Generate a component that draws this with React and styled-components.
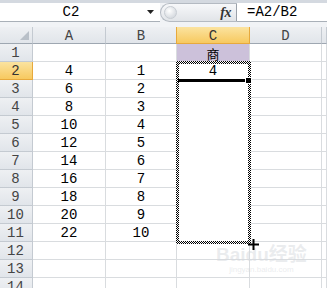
import styled, { createGlobalStyle, css } from 'styled-components';

const GlobalStyle = createGlobalStyle`
  html, body {
    margin: 0;
    padding: 0;
    background: #ffffff;
    overflow: hidden;
  }
  body {
    font-family: "Liberation Mono", monospace;
  }
`

const Window = styled.div`
  width: 327px;
  height: 288px;
  overflow: hidden;
  position: relative;
  background: #ffffff;
`

const FormulaBar = styled.div`
  display: flex;
  align-items: flex-start;
  height: 27px;
  box-sizing: border-box;
  border-top: 3px solid #d4d9e0;
  background: #f1f3f6;
`
const NameBox = styled.div`
  display: flex;
  align-items: center;
  width: 160px;
  height: 19px;
  box-sizing: border-box;
  background: #ffffff;
  border-bottom: 1px solid #a9b0b8;
`
const NameText = styled.span`
  flex: 1;
  text-align: center;
  font-size: 14px;
  color: #000;
  padding-left: 2px;
`
const DropArrow = styled.span`
  width: 20px;
  display: flex;
  justify-content: center;
`
const Grip = styled.div`
  display: flex;
  align-items: center;
  justify-content: space-between;
  width: 77px;
  height: 19px;
  box-sizing: border-box;
  border: 1px solid #b4bac2;
  border-right-color: #9aa1aa;
  border-radius: 10px 0 0 10px;
  background: linear-gradient(#f7f8fa, #e1e4e8);
  padding: 0 5px 0 3px;
`
const Knob = styled.span`
  width: 11px;
  height: 11px;
  border-radius: 50%;
  background: radial-gradient(circle at 40% 35%, #ffffff, #d9dde2 70%);
  border: 1px solid #c7ccd2;
`
const Fx = styled.span`
  font-family: "Liberation Serif", serif;
  font-style: italic;
  font-weight: bold;
  font-size: 14px;
  color: #333;
  letter-spacing: -0.5px;
`
const FormulaInput = styled.div`
  flex: 1;
  height: 19px;
  box-sizing: border-box;
  background: #ffffff;
  border-bottom: 1px solid #a9b0b8;
  padding-left: 10px;
  font-size: 14px;
  line-height: 18px;
  color: #000;
`

const Sheet = styled.div`
  position: relative;
  display: grid;
  grid-template-columns: 33px 73px 71px 73px 72px 1fr;
  grid-template-rows: 17px;
  grid-auto-rows: 18px;
`

const headerLook = css`
  background: linear-gradient(#eef0f3, #e1e5ea);
  color: #444;
  border-right: 1px solid #c4cad1;
  border-bottom: 1px solid #9ea7b1;
`
const activeLook = css`
  background: linear-gradient(#fbe3a0, #f7c95f);
  border-right: 1px solid #e7a93c;
  border-bottom: 1px solid #e7a93c;
  color: #333;
`

const Corner = styled.div`
  ${headerLook}
  box-sizing: border-box;
  display: flex;
  align-items: flex-end;
  justify-content: flex-end;
  padding: 0 3px 3px 0;
`
const ColHead = styled.div`
  ${headerLook}
  ${p => p.$active && activeLook}
  ${p => p.$active && 'border-left: 1px solid #e7a93c; margin-left: -1px;'}
  box-sizing: border-box;
  display: flex;
  align-items: center;
  justify-content: center;
  font-size: 14px;
  padding-top: 1px;
`
const RowHead = styled.div`
  ${headerLook}
  border-bottom: 1px solid #c4cad1;
  ${p => p.$active && activeLook}
  box-sizing: border-box;
  display: flex;
  align-items: center;
  justify-content: center;
  font-size: 14px;
  padding-right: 1px;
`
const Cell = styled.div`
  box-sizing: border-box;
  border-right: 1px solid ${p => (p.$clear ? 'transparent' : '#d9dcdf')};
  border-bottom: 1px solid ${p => (p.$clear ? 'transparent' : '#d9dcdf')};
  background: ${p => p.$fill || '#ffffff'};
  display: flex;
  align-items: center;
  justify-content: center;
  font-size: 14px;
  color: #000;
  padding-top: 1px;
`
const CjkText = styled.span`
  font-family: "Noto Sans CJK SC", sans-serif;
  font-size: 13px;
  line-height: 1;
`

const Ants = styled.div`
  position: absolute;
  left: 176px;
  top: 34px;
  width: 75px;
  height: 183px;
  box-sizing: border-box;
  padding: 3px;
  background: repeating-conic-gradient(#000 0 25%, #fff 0 50%) 0 0 / 2px 2px;
  -webkit-mask: linear-gradient(#000 0 0) content-box, linear-gradient(#000 0 0);
  -webkit-mask-composite: xor;
  mask: linear-gradient(#000 0 0) content-box exclude, linear-gradient(#000 0 0);
  pointer-events: none;
`
const ActiveEdge = styled.div`
  position: absolute;
  left: 178px;
  top: 52px;
  width: 69px;
  height: 3px;
  background: #000;
`
const FillHandle = styled.div`
  position: absolute;
  left: 246px;
  top: 51px;
  width: 5px;
  height: 5px;
  background: #000;
  outline: 1px solid #fff;
`
const Cursor = styled.svg`
  position: absolute;
  left: 248px;
  top: 212px;
`
const Watermark = styled.div`
  position: absolute;
  left: 216px;
  top: 218px;
  display: flex;
  flex-direction: column;
  align-items: center;
  color: rgba(214, 217, 221, 0.5);
  pointer-events: none;
`
const MarkBig = styled.span`
  font-family: "Liberation Sans", "Noto Sans CJK SC", sans-serif;
  font-weight: bold;
  font-size: 19px;
  line-height: 20px;
`
const MarkSmall = styled.span`
  font-family: "Liberation Sans", sans-serif;
  font-size: 8px;
  line-height: 10px;
`

const colA = [4, 6, 8, 10, 12, 14, 16, 18, 20, 22];
const colB = [1, 2, 3, 4, 5, 6, 7, 8, 9, 10];
const rows = Array.from({ length: 14 }, (_, i) => i + 1);

export default function App() {
  return (
    <Window>
      <GlobalStyle />
      <FormulaBar>
        <NameBox>
          <NameText>C2</NameText>
          <DropArrow>
            <svg width="7" height="4" viewBox="0 0 7 4">
              <path d="M0 0h7L3.5 4z" fill="#222" />
            </svg>
          </DropArrow>
        </NameBox>
        <Grip>
          <Knob />
          <Fx>fx</Fx>
        </Grip>
        <FormulaInput>=A2/B2</FormulaInput>
      </FormulaBar>

      <Sheet>
        <Corner>
          <svg width="9" height="9" viewBox="0 0 9 9">
            <path d="M9 0v9H0z" fill="#b9c0c8" />
          </svg>
        </Corner>
        <ColHead>A</ColHead>
        <ColHead>B</ColHead>
        <ColHead $active>C</ColHead>
        <ColHead>D</ColHead>
        <ColHead />

        {rows.map(r => {
          const i = r - 2;
          const inRange = r >= 2 && r <= 11;
          return [
            <RowHead key={`h${r}`} $active={r === 2}>{r}</RowHead>,
            <Cell key={`a${r}`}>{colA[i] ?? ''}</Cell>,
            <Cell key={`b${r}`}>{colB[i] ?? ''}</Cell>,
            <Cell key={`c${r}`} $clear={inRange} $fill={r === 1 ? '#ccc1da' : undefined}>
              {r === 1 && <CjkText>商</CjkText>}
              {r === 2 && '4'}
            </Cell>,
            <Cell key={`d${r}`} />,
            <Cell key={`e${r}`} />,
          ];
        })}

        <Ants />
        <ActiveEdge />
        <FillHandle />
        <Watermark>
          <MarkBig>Baidu经验</MarkBig>
          <MarkSmall>jingyan.baidu.com</MarkSmall>
        </Watermark>
        <Cursor width="11" height="11" viewBox="0 0 11 11">
          <path d="M4.5 0h2v4.5H11v2H6.5V11h-2V6.5H0v-2h4.5z" fill="#000" />
        </Cursor>
      </Sheet>
    </Window>
  );
}
